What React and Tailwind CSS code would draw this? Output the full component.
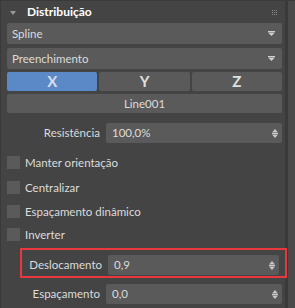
import React from "react";

const font = { fontFamily: 'Lato, "Noto Sans", sans-serif' };

function DropArrow() {
  return (
    <svg width="7" height="5" viewBox="0 0 7 5" className="flex-none">
      <rect x="0" y="0" width="7" height="1" fill="#d0d0d0" />
      <path d="M0 1.5h7L3.5 5z" fill="#d0d0d0" />
    </svg>
  );
}

function SpinArrows() {
  return (
    <svg width="6" height="9" viewBox="0 0 6 9" className="flex-none">
      <path d="M3 0L6 3.5H0z" fill="#c8c8c8" />
      <rect x="0" y="4" width="6" height="1" fill="#c8c8c8" />
      <path d="M0 5.5h6L3 9z" fill="#c8c8c8" />
    </svg>
  );
}

function Select({ label, className }) {
  return (
    <div className={`flex h-[21px] items-center justify-between rounded-[2px] bg-[#5a5a5a] pl-[5px] pr-[7px] text-[11.5px] text-[#dcdcdc] ${className}`}>
      <span>{label}</span>
      <DropArrow />
    </div>
  );
}

function Spinner({ label, value, className }) {
  return (
    <div className={`flex items-center ${className}`}>
      <span className="w-[93px] flex-none text-right text-[11.5px] text-[#dcdcdc]">{label}</span>
      <div className="ml-[6px] flex h-[20px] flex-1 items-center justify-between rounded-[2px] bg-[#5a5a5a] pl-[6px] pr-[4px] text-[11.5px] text-[#dcdcdc]">
        <span>{value}</span>
        <SpinArrows />
      </div>
    </div>
  );
}

function Check({ label, className }) {
  return (
    <div className={`flex h-[13px] items-center gap-[5px] ${className}`}>
      <span className="h-[13px] w-[13px] flex-none bg-[#5a5a5a]" />
      <span className="text-[11.5px] text-[#dcdcdc]">{label}</span>
    </div>
  );
}

export default function App() {
  return (
    <div className="flex h-[308px] w-[295px] overflow-hidden bg-[#3a3a3a]" style={font}>
      <div className="mt-[1px] ml-[1px] flex w-[284px] flex-none flex-col bg-[#444444] pl-[6px] pr-[3px]">
        <div className="flex h-[22px] items-center">
          <svg width="6" height="4" viewBox="0 0 6 4" className="ml-[3px] mt-[1px] flex-none">
            <path d="M0 0h6L3 4z" fill="#9a9a9a" />
          </svg>
          <span className="ml-[11px] text-[12px] font-bold text-white">Distribuição</span>
          <div className="ml-auto mr-[5px] grid grid-cols-3 gap-[1px]">
            {Array.from({ length: 9 }).map((_, i) => (
              <span key={i} className="h-[1px] w-[1px] bg-[#8a8a8a]" />
            ))}
          </div>
        </div>

        <Select label="Spline" />
        <Select label="Preenchimento" className="mt-[4px]" />

        <div className="mt-[3px] flex h-[19px] gap-[2px]">
          <div className="flex flex-1 items-center justify-center rounded-[2px] bg-[#5b88c6] text-[15px] font-bold text-[#d8dde6]">X</div>
          <div className="flex flex-1 items-center justify-center rounded-[2px] bg-[#5a5a5a] text-[15px] font-bold text-[#e0e0e0]">Y</div>
          <div className="flex flex-1 items-center justify-center rounded-[2px] bg-[#5a5a5a] text-[15px] font-bold text-[#e0e0e0]">Z</div>
        </div>

        <div className="mt-[3px] flex h-[19px] items-center justify-center rounded-[2px] bg-[#5a5a5a] text-[11.5px] text-[#dcdcdc]">
          Line001
        </div>

        <Spinner label="Resistência" value="100,0%" className="mt-[10px]" />

        <Check label="Manter orientação" className="mt-[13px]" />
        <Check label="Centralizar" className="mt-[12px]" />
        <Check label="Espaçamento dinâmico" className="mt-[11px]" />
        <Check label="Inverter" className="mt-[10px]" />

        <div className="-mr-[5px] ml-[13px] mt-[7px] border-2 border-[#e8383d] pt-[5px] pb-[1px] pr-[6px]">
          <Spinner label="Deslocamento" value="0,9" className="-ml-[13px]" />
        </div>

        <Spinner label="Espaçamento" value="0,0" className="mt-[6px]" />
      </div>
      <div className="ml-[3px] mt-[1px] w-[7px] flex-none bg-[#4a4a4a]" />
    </div>
  );
}
